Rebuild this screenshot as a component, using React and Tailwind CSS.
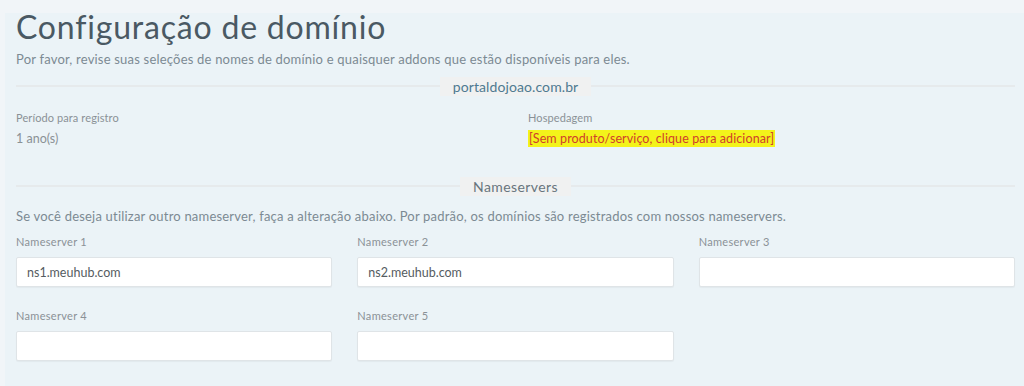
import React from "react";

const font = { fontFamily: "Lato, 'Open Sans', sans-serif" };

const Divider = ({ label, className }) => (
  <div className={`flex items-center ${className}`}>
    <div className="h-[2px] flex-1 bg-[#e6eaec] -translate-y-[1px]" />
    <span className="h-[19px] bg-[#f0f1f1] px-[13px] leading-[19px]">{label}</span>
    <div className="h-[2px] flex-1 bg-[#e6eaec] -translate-y-[1px]" />
  </div>
);

const Field = ({ label, value }) => (
  <div className="flex flex-col">
    <label className="mb-[8px] text-[11px] leading-[14px] tracking-[0.3px] text-[#8a9196]">{label}</label>
    <input
      readOnly
      value={value}
      className="h-[30px] w-full rounded-[2px] border border-[#dfe4e7] bg-white px-[10px] text-[12.5px] text-[#555c61] shadow-[0_1px_1px_rgba(0,0,0,0.04)] outline-none"
    />
  </div>
);

export default function App() {
  const servers = ["ns1.meuhub.com", "ns2.meuhub.com", "", "", ""];

  return (
    <div className="h-[386px] w-[1024px] overflow-hidden bg-[#f1f5f8] pl-[5px] pt-[13px]" style={font}>
      <div className="h-full bg-[#ebf3f7] pl-[11px] pr-[9px]">
        <h1 className="text-[32px] leading-[28px] font-normal tracking-[0.8px] text-[#4a5963]">
          Configuração de domínio
        </h1>
        <p className="mt-[10px] text-[13px] leading-[16px] tracking-[0.2px] text-[#7c8a93]">
          Por favor, revise suas seleções de nomes de domínio e quaisquer addons que estão disponíveis para eles.
        </p>

        <Divider label="portaldojoao.com.br" className="mt-[10px] text-[14px] tracking-[0.1px] text-[#4f7a90]" />

        <div className="mt-[15px] grid grid-cols-2 gap-x-[25px]">
          <div>
            <div className="text-[11px] leading-[14px] tracking-[0.1px] text-[#8a9196]">Período para registro</div>
            <div className="mt-[6px] text-[12.5px] leading-[16px] text-[#8a9196]">1 ano(s)</div>
          </div>
          <div>
            <div className="text-[11px] leading-[14px] tracking-[0.1px] text-[#8a9196]">Hospedagem</div>
            <div className="mt-[6px] text-[12.5px] leading-[16px] tracking-[0.1px]">
              <span className="bg-[#f3f31a] px-[1px] py-[1px] text-[#d0402a]">
                [Sem produto/serviço, clique para adicionar]
              </span>
            </div>
          </div>
        </div>

        <Divider label="Nameservers" className="mt-[30px] text-[14px] tracking-[0.4px] text-[#68757d]" />

        <p className="mt-[12px] text-[13px] leading-[16px] tracking-[0.2px] text-[#7c8a93]">
          Se você deseja utilizar outro nameserver, faça a alteração abaixo. Por padrão, os domínios são registrados com nossos nameservers.
        </p>

        <div className="mt-[11px] grid grid-cols-3 gap-x-[25px] gap-y-[22px]">
          {servers.map((s, i) => (
            <Field key={i} label={`Nameserver ${i + 1}`} value={s} />
          ))}
        </div>
      </div>
    </div>
  );
}
